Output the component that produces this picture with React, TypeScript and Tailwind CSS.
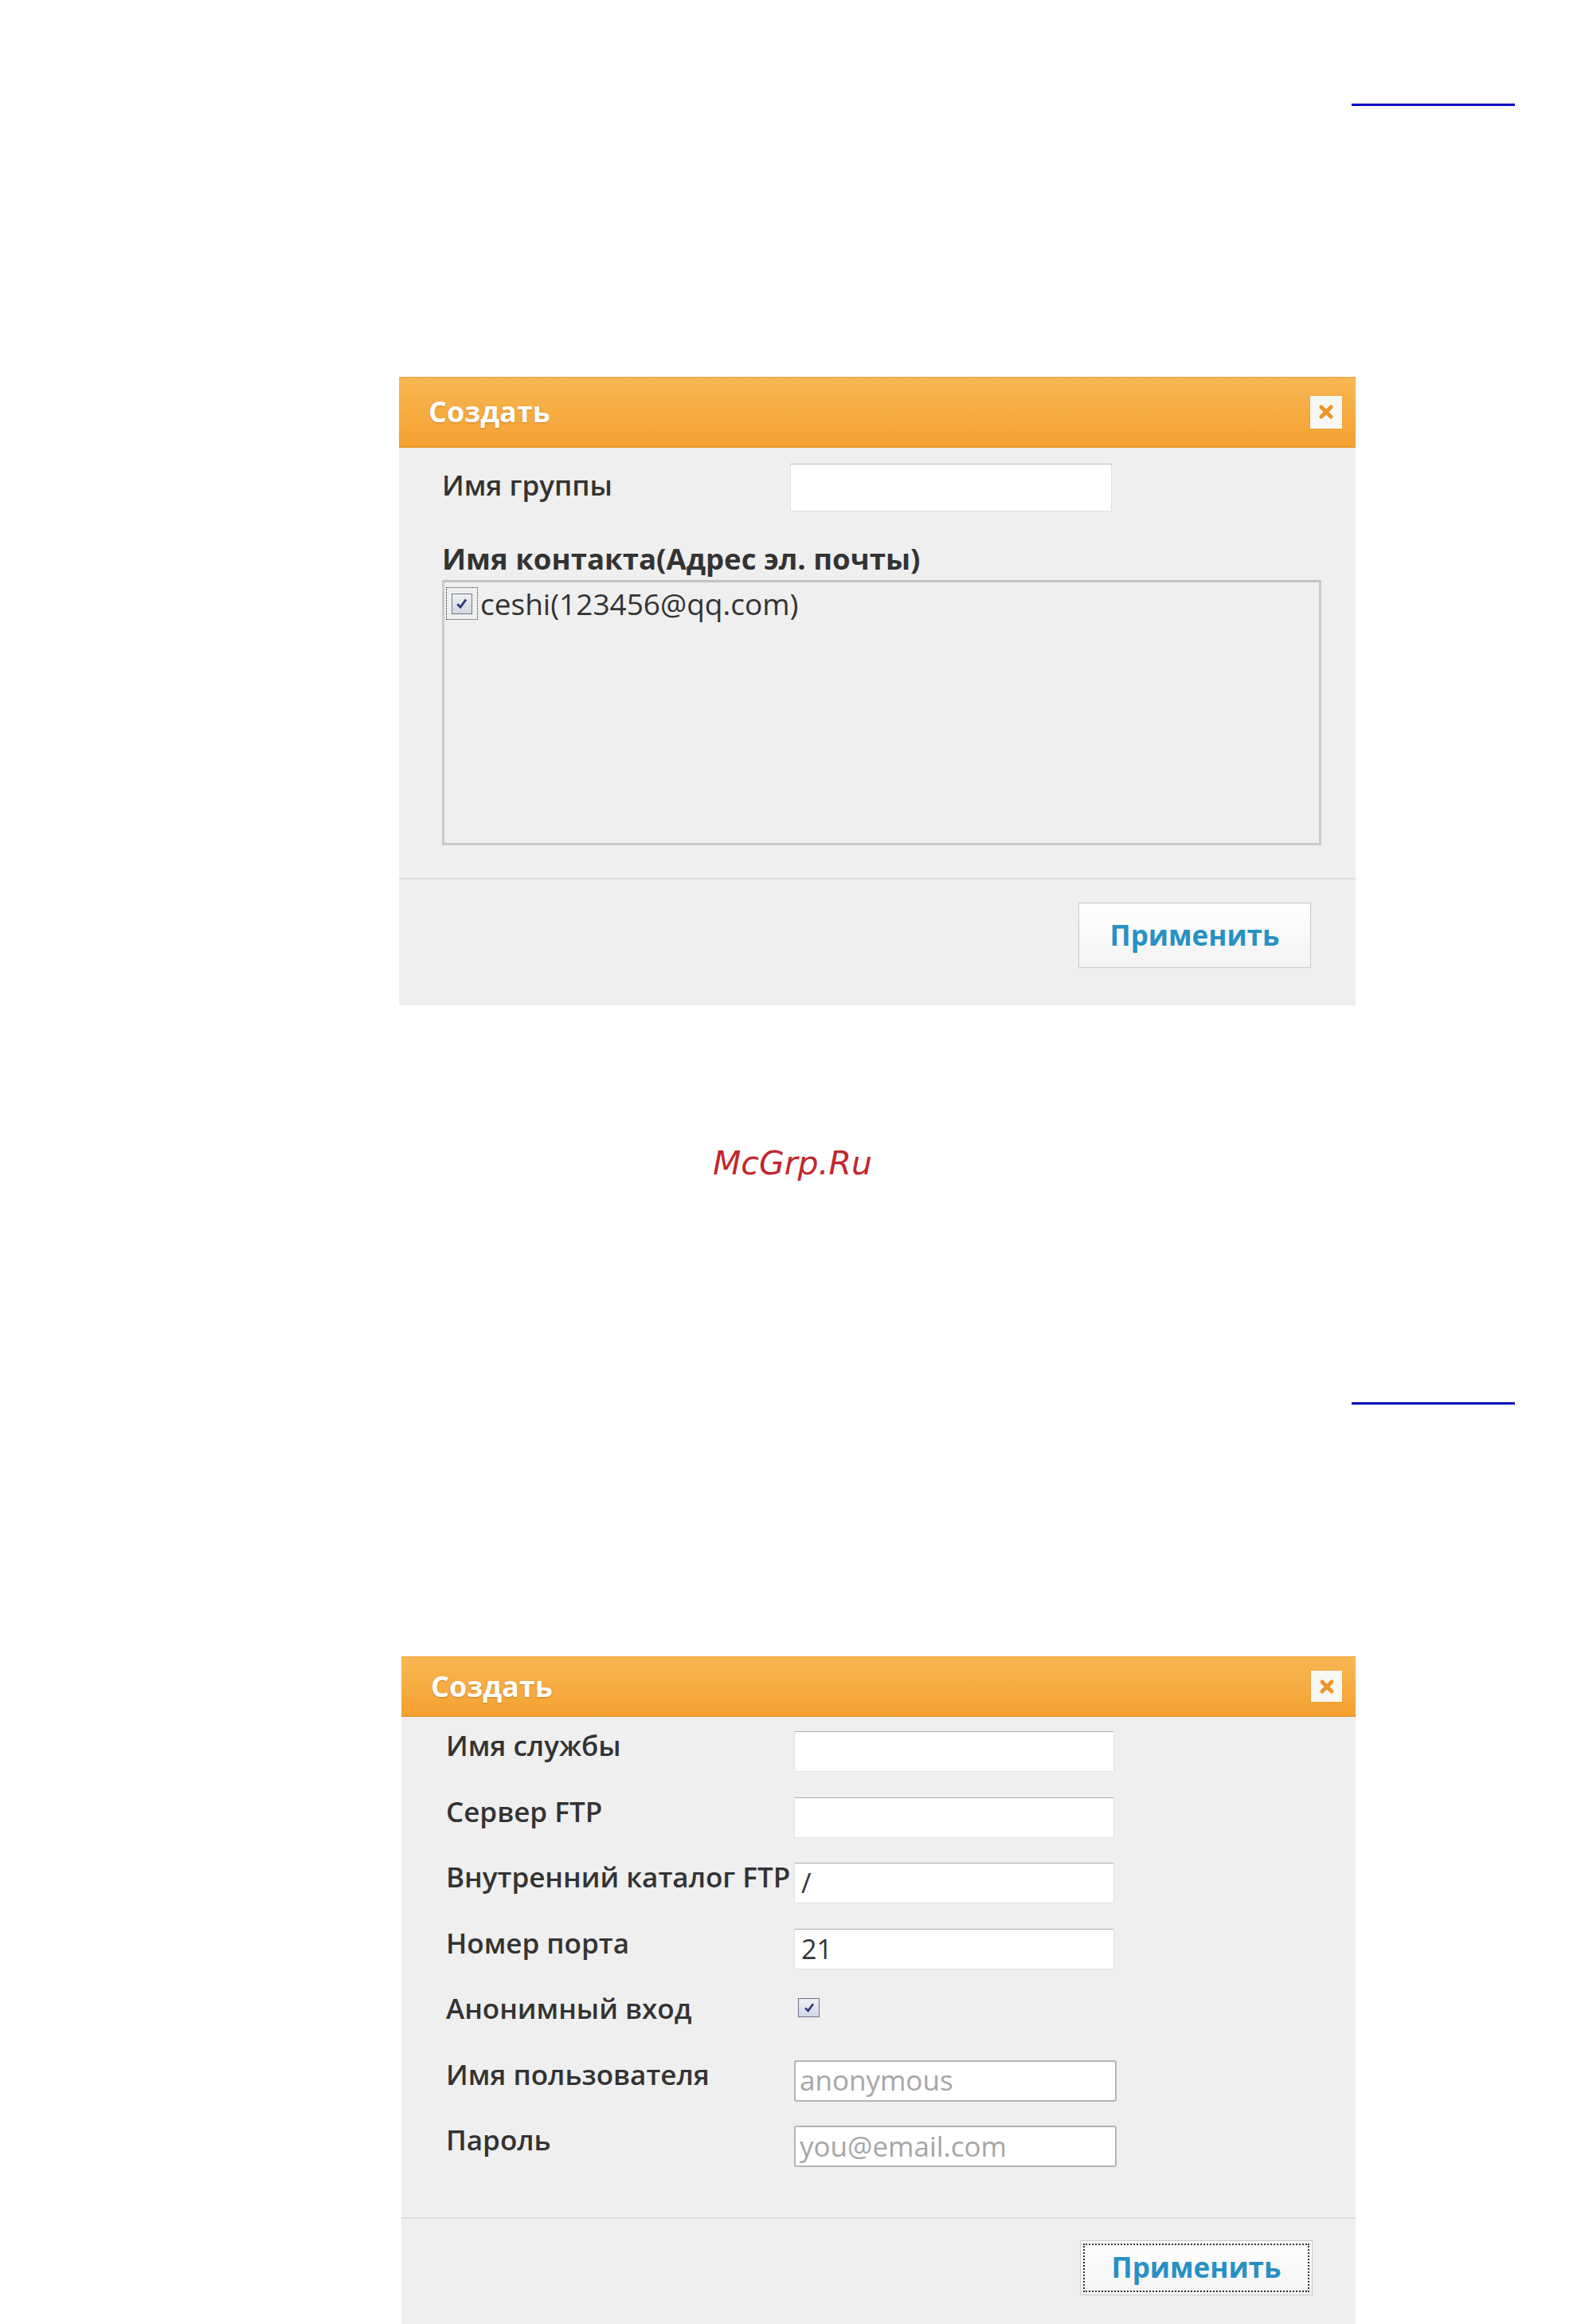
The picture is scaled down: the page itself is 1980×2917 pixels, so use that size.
import type { ReactNode } from 'react'

const CloseButton = ({ box }: { box: string }) => (
  <div className={`${box} flex items-center justify-center bg-[#f7f7f5] shadow-[0_0_1px_rgba(0,0,0,0.2)]`}>
    <svg viewBox="0 0 20 20" className="w-[20px] h-[20px]">
      <path d="M4 4 L16 16 M16 4 L4 16" fill="none" stroke="#f0952b" strokeWidth="5" strokeLinecap="round" />
    </svg>
  </div>
)

const Checkbox = ({ box }: { box: string }) => (
  <div className={`${box} flex items-center justify-center border border-[#6f7589] bg-linear-to-b from-[#eef0f5] to-[#d3d8e4]`}>
    <svg viewBox="0 0 16 16" className="w-[72%] h-[72%]">
      <path d="M3 8.5 L6.6 12.2 L13 3.2" fill="none" stroke="#28367c" strokeWidth="2.6" />
    </svg>
  </div>
)

const Header = ({ height, close }: { height: string; close: ReactNode }) => (
  <div
    className={`${height} flex items-center justify-between pl-[37px] pr-[17px] border-t border-t-[#eea23c] border-b-2 border-b-[#e8952c] bg-linear-to-b from-[#f8b752] to-[#f4a130]`}
  >
    <span className="text-[36px] font-bold text-white [text-shadow:0_1px_2px_rgba(120,60,0,0.35)]">Создать</span>
    {close}
  </div>
)

const ApplyButton = ({ size, focused }: { size: string; focused?: boolean }) => (
  <button
    type="button"
    className={`${size} flex items-center justify-center border border-[#c9c9c9] bg-linear-to-b from-white to-[#f3f3f3] p-[3px]`}
  >
    <span
      className={`w-full h-full flex items-center justify-center text-[35px] font-bold text-[#2790c4] ${
        focused ? 'border-2 border-dotted border-[#333]' : ''
      }`}
    >
      Применить
    </span>
  </button>
)

const FtpRow = ({ label, children }: { label: string; children: ReactNode }) => (
  <div className="h-[51px] flex items-start">
    <div className="w-[437px] shrink-0 leading-[36px] text-[35px] font-semibold text-[#333] whitespace-nowrap">{label}</div>
    {children}
  </div>
)

const TextBox = ({ value }: { value?: string }) => (
  <div className="w-[402px] h-[51px] flex items-center pl-[8px] bg-white border border-[#e2e2e2] border-t-[#a9a9a9] rounded-[2px] text-[34px] text-[#333]">
    {value}
  </div>
)

const GrayBox = ({ value }: { value: string }) => (
  <div className="w-[405px] h-[52px] flex items-center pl-[5px] bg-white border-2 border-[#b4b4b4] rounded-[3px] text-[35px] text-[#a6a6a6]">
    {value}
  </div>
)

export default function App() {
  return (
    <div className="w-[1980px] h-[2917px] overflow-hidden bg-white flex flex-col font-['Open_Sans',sans-serif]">
      <div className="mt-[130px] ml-[1697px] w-[205px] h-[3px] bg-[#0000c0]" />

      {/* Group dialog */}
      <div className="mt-[340px] ml-[501px] w-[1201px] h-[789px] flex flex-col bg-[#efefef]">
        <Header height="h-[89px]" close={<CloseButton box="w-[40px] h-[41px]" />} />
        <div className="flex flex-col pl-[54px] pr-[43px]">
          <div className="mt-[20px] h-[60px] flex items-center">
            <div className="w-[437px] shrink-0 pb-[6px] text-[35px] font-semibold text-[#333]">Имя группы</div>
            <div className="w-[404px] h-[60px] bg-white border border-[#e2e2e2] border-t-[#bdbdbd]" />
          </div>
          <div className="mt-[36px] leading-[46px] text-[36.6px] font-bold text-[#333]">Имя контакта(Адрес эл. почты)</div>
          <div className="mt-[4px] h-[333px] border-[3px] border-[#cacaca] border-t-[#c3c3c3]">
            <div className="mt-[6px] ml-[2px] flex items-center">
              <div className="w-[40px] h-[41px] flex items-center justify-center border border-dotted border-[#333]">
                <Checkbox box="w-[26px] h-[26px]" />
              </div>
              <span className="ml-[3px] leading-[41px] text-[37px] text-[#333]">ceshi(123456@qq.com)</span>
            </div>
          </div>
        </div>
        <div className="mt-[41px] h-[2px] bg-[#dcdcdc]" />
        <div className="mt-[29px] flex justify-end pr-[56px]">
          <ApplyButton size="w-[292px] h-[82px]" />
        </div>
      </div>

      <div className="mt-[178px] ml-[895px] leading-[40px] text-[41px] italic text-[#c1272d] font-['DejaVu_Sans',sans-serif]">
        McGrp.Ru
      </div>

      <div className="mt-[280px] ml-[1697px] w-[205px] h-[3px] bg-[#0000c0]" />

      {/* FTP dialog */}
      <div className="mt-[316px] ml-[504px] w-[1198px] flex-1 flex flex-col bg-[#efefef]">
        <Header height="h-[76px]" close={<CloseButton box="w-[39px] h-[39px]" />} />
        <div className="mt-[18px] flex flex-col gap-[31.5px] pl-[56px]">
          <FtpRow label="Имя службы">
            <TextBox />
          </FtpRow>
          <FtpRow label="Сервер FTP">
            <TextBox />
          </FtpRow>
          <FtpRow label="Внутренний каталог FTP">
            <TextBox value="/" />
          </FtpRow>
          <FtpRow label="Номер порта">
            <TextBox value="21" />
          </FtpRow>
          <FtpRow label="Анонимный вход">
            <div className="mt-[5px] ml-[5px]">
              <Checkbox box="w-[27px] h-[24px]" />
            </div>
          </FtpRow>
          <FtpRow label="Имя пользователя">
            <GrayBox value="anonymous" />
          </FtpRow>
          <FtpRow label="Пароль">
            <GrayBox value="you@email.com" />
          </FtpRow>
        </div>
        <div className="mt-[64px] h-[2px] bg-[#dcdcdc]" />
        <div className="mt-[27px] flex justify-end pr-[54px]">
          <ApplyButton size="w-[292px] h-[69px]" focused />
        </div>
      </div>
    </div>
  )
}
